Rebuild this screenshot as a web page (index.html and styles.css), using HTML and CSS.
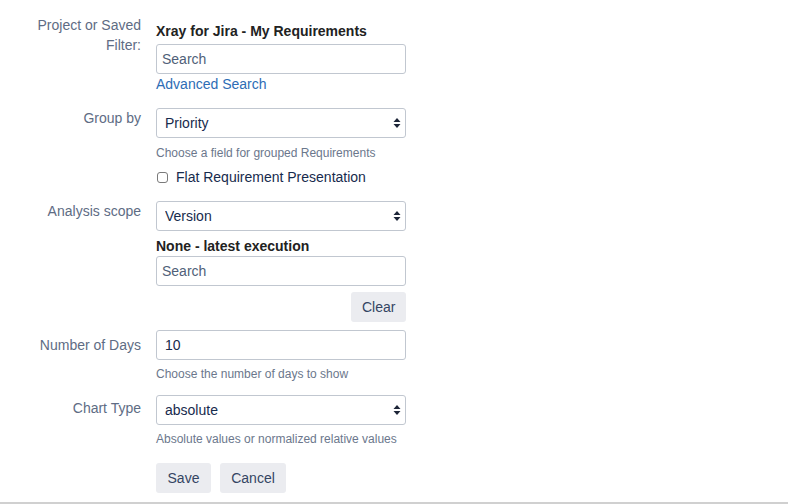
FILE: index.html
```html
<!DOCTYPE html>
<html>
<head>
<meta charset="utf-8">
<link rel="stylesheet" href="styles.css">
</head>
<body>
<div class="page">
  <form class="form">
    <div class="row row-project">
      <label class="lbl lbl-top">Project or Saved Filter:</label>
      <div class="field field-project">
        <div class="title">Xray for Jira - My Requirements</div>
        <input class="text" type="text" placeholder="Search">
        <a class="link" href="#">Advanced Search</a>
      </div>
    </div>

    <div class="row row-group">
      <label class="lbl lbl-high">Group by</label>
      <div class="field">
        <div class="select-wrap">
          <select class="select"><option>Priority</option></select>
          <svg class="arrows" width="8" height="12" viewBox="0 0 8 12"><path d="M4 1 L7.5 5 L0.5 5 Z M4 11 L7.5 7 L0.5 7 Z" fill="#1d2538"/></svg>
        </div>
        <div class="desc desc-group">Choose a field for grouped Requirements</div>
        <label class="check">
          <span class="box"></span>
          <span class="check-text">Flat Requirement Presentation</span>
        </label>
      </div>
    </div>

    <div class="row row-scope">
      <label class="lbl lbl-high">Analysis scope</label>
      <div class="field">
        <div class="select-wrap">
          <select class="select"><option>Version</option></select>
          <svg class="arrows" width="8" height="12" viewBox="0 0 8 12"><path d="M4 1 L7.5 5 L0.5 5 Z M4 11 L7.5 7 L0.5 7 Z" fill="#1d2538"/></svg>
        </div>
        <div class="title title-scope">None - latest execution</div>
        <input class="text" type="text" placeholder="Search">
        <div class="clear-row">
          <button type="button" class="btn btn-clear">Clear</button>
        </div>
      </div>
    </div>

    <div class="row row-days">
      <label class="lbl lbl-input">Number of Days</label>
      <div class="field">
        <input class="text text-value" type="text" value="10">
        <div class="desc desc-days">Choose the number of days to show</div>
      </div>
    </div>

    <div class="row row-chart">
      <label class="lbl lbl-select">Chart Type</label>
      <div class="field">
        <div class="select-wrap">
          <select class="select"><option>absolute</option></select>
          <svg class="arrows" width="8" height="12" viewBox="0 0 8 12"><path d="M4 1 L7.5 5 L0.5 5 Z M4 11 L7.5 7 L0.5 7 Z" fill="#1d2538"/></svg>
        </div>
        <div class="desc desc-chart">Absolute values or normalized relative values</div>
      </div>
    </div>

    <div class="row row-buttons">
      <div class="lbl"></div>
      <div class="field buttons">
        <button type="button" class="btn btn-save">Save</button>
        <button type="button" class="btn btn-cancel">Cancel</button>
      </div>
    </div>
  </form>
  <div class="bottom-line"></div>
</div>
</body>
</html>
```

FILE: styles.css
```css
html, body {
  margin: 0;
  padding: 0;
  background: #ffffff;
}

body {
  font-family: "Liberation Sans", Arial, Helvetica, sans-serif;
  font-size: 14px;
  line-height: 20px;
  color: #172b4d;
}

.page {
  width: 788px;
  height: 504px;
  display: flex;
  flex-direction: column;
}

.form {
  padding-top: 15px;
  flex: 1;
}

.row {
  display: grid;
  grid-template-columns: 121px 250px;
  column-gap: 15px;
  padding-left: 20px;
  align-items: start;
}

.lbl {
  text-align: right;
  color: #5e6c84;
  font-size: 14px;
  line-height: 20px;
}

.lbl-top { padding-top: 0; }
.lbl-high { padding-top: 0; }
.lbl-select { padding-top: 3px; }
.lbl-input { padding-top: 5px; }

.field {
  display: flex;
  flex-direction: column;
  align-items: stretch;
}

.field-project { padding-top: 6px; }

.title {
  font-weight: bold;
  color: #222222;
  line-height: 20px;
  margin-bottom: 3px;
}

.title-scope {
  margin-top: 5px;
  margin-bottom: 0;
}

.text {
  box-sizing: border-box;
  height: 30px;
  width: 250px;
  margin: 0;
  border: 1px solid #c1c7d0;
  border-radius: 3px;
  padding: 0 5px;
  font-family: inherit;
  font-size: 14px;
  color: #172b4d;
  background: #ffffff;
  outline: none;
}

.text::placeholder {
  color: #505f79;
  opacity: 1;
}

.text-value {
  padding-left: 8px;
}

.link {
  color: #2d6db5;
  text-decoration: none;
  line-height: 20px;
}

.row-group { margin-top: 14px; }
.row-scope { margin-top: 14px; }
.row-days { margin-top: 8px; }
.row-chart { margin-top: 13px; }
.row-buttons { margin-top: 16px; }

.select-wrap {
  position: relative;
  width: 250px;
  height: 30px;
}

.select {
  -webkit-appearance: none;
  appearance: none;
  box-sizing: border-box;
  width: 250px;
  height: 30px;
  margin: 0;
  border: 1px solid #c1c7d0;
  border-radius: 3px;
  padding: 0 20px 0 8px;
  font-family: inherit;
  font-size: 14px;
  color: #172b4d;
  background: #ffffff;
  outline: none;
}

.arrows {
  position: absolute;
  right: 5px;
  top: 9px;
  pointer-events: none;
}

.desc {
  font-size: 12px;
  line-height: 16px;
  color: #6b778c;
}

.desc-group { margin-top: 7px; }
.desc-days { margin-top: 6px; }
.desc-chart { margin-top: 6px; }

.check {
  display: flex;
  align-items: center;
  margin-top: 6px;
  height: 20px;
}

.box {
  box-sizing: border-box;
  width: 11px;
  height: 11px;
  border: 1px solid #7a7a7a;
  border-radius: 3px;
  margin-left: 1px;
  margin-top: 1px;
  background: #ffffff;
}

.check-text {
  margin-left: 8px;
  color: #172b4d;
}

.clear-row {
  display: flex;
  justify-content: flex-end;
  margin-top: 6px;
}

.btn {
  box-sizing: border-box;
  height: 30px;
  border: none;
  border-radius: 3px;
  background: #ebecf0;
  color: #344563;
  font-family: inherit;
  font-size: 14px;
  padding: 0 11px;
  margin: 0;
  cursor: pointer;
}

.btn-clear { width: 55px; }
.btn-save { width: 55px; }
.btn-cancel { width: 66px; }

.buttons {
  flex-direction: row;
  gap: 9px;
}

.bottom-line {
  height: 2px;
  background: #d0d0d0;
  margin-bottom: 0;
}
```
